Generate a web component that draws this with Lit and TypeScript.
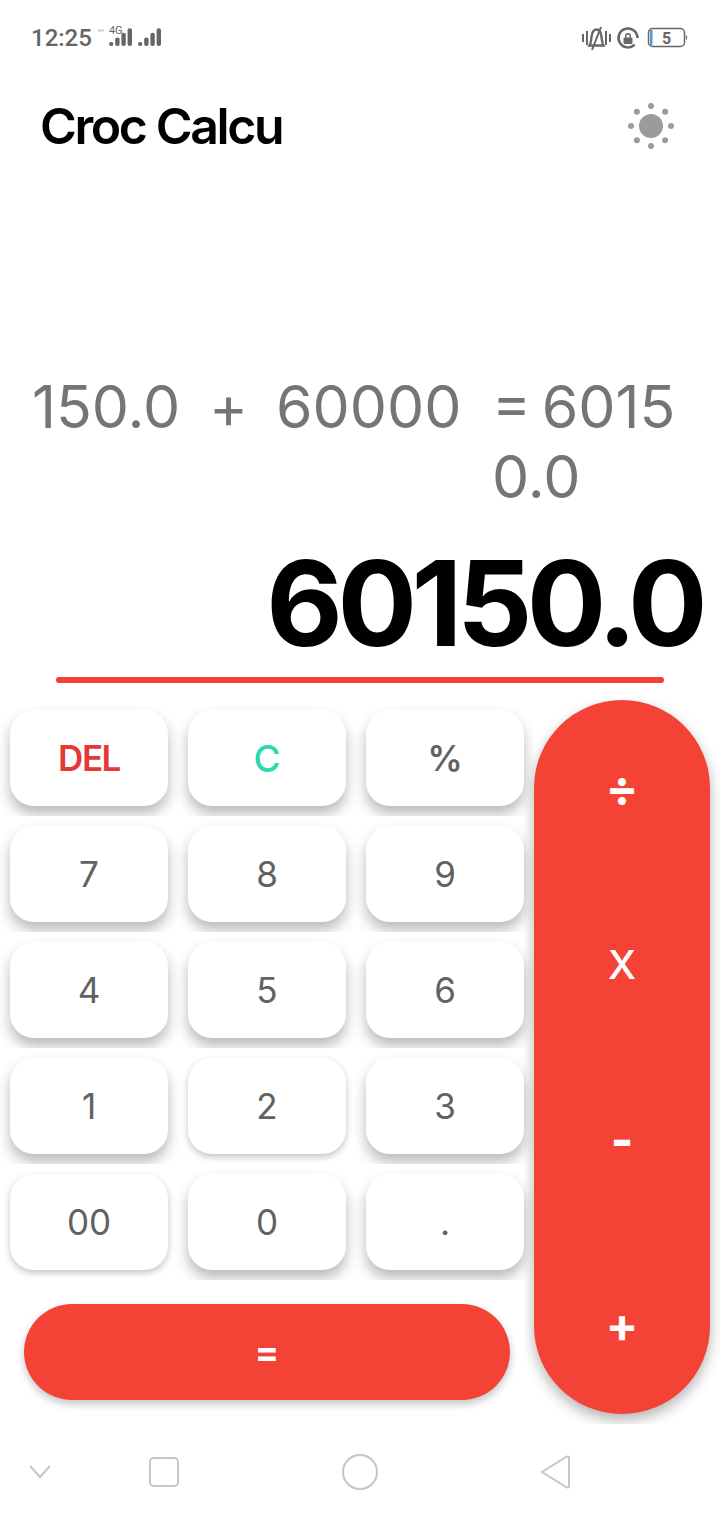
import { LitElement, css, html, svg } from "lit";
import { customElement } from "lit/decorators.js";

const ROWS = [
  [["DEL", "del"], ["C", "clear"], ["%", "pct"]],
  [["7", ""], ["8", ""], ["9", ""]],
  [["4", ""], ["5", ""], ["6", ""]],
  [["1", ""], ["2", "soft"], ["3", ""]],
  [["00", "soft"], ["0", ""], [".", ""]],
];

const OPS = [["÷", "sym"], ["X", "letter"], ["-", "minus"], ["+", "sym"]];

const SUN_DOTS = [0, 45, 90, 135, 180, 225, 270, 315];

@customElement("app-root")
export class AppRoot extends LitElement {
  static styles = css`
    :host {
      display: block;
      width: 720px;
      height: 1520px;
      background: #fff;
      font-family: Inter, Lato, sans-serif;
      overflow: hidden;
    }
    .status {
      height: 76px;
      display: flex;
      align-items: center;
      padding: 0 33px 0 31px;
      color: #666;
    }
    .clock {
      font-family: Roboto, sans-serif;
      font-size: 24px;
      font-weight: 500;
      color: #666;
    }
    .net {
      position: relative;
      display: flex;
      margin-left: 5px;
    }
    .net-label {
      position: absolute;
      left: 12px;
      top: -3px;
      font-family: Roboto, sans-serif;
      font-size: 11px;
      line-height: 11px;
      color: #666;
    }
    .spacer {
      flex: 1;
    }
    .status-right {
      display: flex;
      align-items: center;
    }
    .header {
      height: 100px;
      display: flex;
      align-items: center;
      justify-content: space-between;
      padding: 0 46px 0 40px;
    }
    .title {
      font-size: 50px;
      font-weight: 600;
      letter-spacing: -2.4px;
      color: #000;
    }
    .sun {
      display: block;
    }
    .history {
      display: flex;
      align-items: flex-start;
      padding: 196px 0 0 32px;
      font-size: 59px;
      line-height: 70px;
      color: #757575;
      height: 146px;
    }
    .h-a {
      width: 177px;
    }
    .h-op {
      width: 67px;
    }
    .h-b {
      width: 216px;
    }
    .h-res {
      width: 190px;
      word-break: break-all;
      word-spacing: -6px;
    }
    .result {
      padding: 20px 18px 0 0;
      text-align: right;
      font-size: 118px;
      line-height: 130px;
      font-weight: 700;
      color: #000;
      letter-spacing: -5.5px;
    }
    .rule {
      height: 6px;
      margin: 9px 56px 0;
      border-radius: 3px;
      background: #f44336;
    }
    .pad {
      display: flex;
      margin-top: 17px;
    }
    .keys {
      width: 534px;
    }
    .row {
      display: flex;
      height: 116px;
      overflow: hidden;
    }
    .cell {
      width: 178px;
      padding: 10px;
      box-sizing: border-box;
    }
    .key {
      height: 96px;
      border-radius: 24px;
      background: #fff;
      box-shadow: 0 8px 14px rgba(0, 0, 0, 0.28);
      display: flex;
      align-items: center;
      justify-content: center;
      font-size: 35px;
      color: #616161;
    }
    .soft {
      box-shadow: 0 3px 7px rgba(0, 0, 0, 0.24);
    }
    .del {
      color: #e53935;
      font-weight: 600;
      letter-spacing: -1.5px;
    }
    .clear {
      color: #2bd9b0;
      font-weight: 500;
      font-size: 37px;
    }
    .pct {
      font-weight: 600;
    }
    .equals-wrap {
      padding: 24px 24px 0;
    }
    .equals {
      height: 96px;
      border-radius: 48px;
      background: #f44336;
      box-shadow: 0 4px 8px rgba(0, 0, 0, 0.24);
      display: flex;
      align-items: center;
      justify-content: center;
      font-size: 36px;
      font-weight: 700;
      color: #fff;
    }
    .ops-clip {
      margin-left: -10px;
      padding-left: 10px;
      width: 186px;
      height: 724px;
      overflow: hidden;
    }
    .ops {
      width: 176px;
      height: 714px;
      border-radius: 88px;
      background: #f44336;
      box-shadow: 0 6px 14px rgba(0, 0, 0, 0.3);
      display: flex;
      flex-direction: column;
      align-items: center;
    }
    .op {
      height: 181px;
      display: flex;
      align-items: center;
      justify-content: center;
      font-size: 38px;
      font-weight: 600;
      line-height: 1;
      color: #fff;
    }
    .op:first-child {
      margin-top: -1px;
    }
    .sym {
      font-size: 48px;
      font-weight: 700;
    }
    .letter {
      font-size: 40px;
      font-weight: 500;
    }
    .minus {
      font-size: 48px;
      font-weight: 800;
      padding-bottom: 5px;
      height: 176px;
    }
    .minus + .op {
      margin-top: 5px;
    }
    .nav {
      height: 96px;
      display: flex;
      align-items: center;
    }
    .nav svg {
      fill: none;
      stroke: #c6c6c6;
      stroke-width: 2;
      display: block;
    }
    .nav-chevron {
      margin-left: 29px;
    }
    .nav-square {
      margin-left: 98px;
    }
    .nav-circle {
      margin-left: 163px;
    }
    .nav-back {
      margin-left: 162px;
    }
  `;

  private renderBars(x: number) {
    return [0, 1, 2, 3].map(
      (i) => svg`<rect x=${x + i * 6.2} y=${14 - i * 4.6} width="4.4" height=${4 + i * 4.6} rx="2" fill="#666" />`
    );
  }

  private renderStatus() {
    return html`
      <div class="status">
        <span class="clock">12:25</span>
        <div class="net">
          <span class="net-label">4G</span>
          <svg width="64" height="20" viewBox="0 0 64 20">
            <path d="M1 2.500h6" stroke="#ccc" stroke-width="2" />
            ${this.renderBars(12)}
            ${this.renderBars(41)}
          </svg>
        </div>
        <div class="spacer"></div>
        <div class="status-right">
          <svg width="106" height="26" viewBox="0 0 106 26" fill="none" stroke="#666">
            <path d="M2 9v8M6 6v14M25 6v14M29 9v8" stroke-width="2" />
            <path d="M8.500 20.500c2-3 1.500-7 2.200-10 .8-4 2.800-6 4.800-6s4 2 4.800 6c.7 3 .2 7 2.200 10z" stroke-width="2.400" />
            <path d="M20 2 11 25" stroke-width="2" />
            <path d="M53.700 19.700A9.500 9.500 0 1 1 56.500 13" stroke-width="2.500" />
            <path d="M44 12.500V11a3 3 0 0 1 6 0v1.500h-1.500V11a1.500 1.500 0 0 0-3 0v1.500z" fill="#666" stroke="none" />
            <rect x="42.500" y="12.500" width="9" height="6.500" rx="1" fill="#666" stroke="none" />
            <rect x="67.500" y="3.500" width="36" height="18" rx="4" stroke-width="1.500" />
            <rect x="69" y="5" width="2.500" height="15" fill="#4a9bd4" stroke="none" />
            <rect x="105" y="10.500" width="1" height="4" fill="#666" stroke="none" />
            <text x="85.500" y="18.500" text-anchor="middle" font-family="Roboto, sans-serif" font-size="16" font-weight="700" fill="#666" stroke="none">5</text>
          </svg>
        </div>
      </div>
    `;
  }

  private renderKey([label, kind]: string[]) {
    return html`<div class="cell"><div class="key ${kind}">${label}</div></div>`;
  }

  render() {
    return html`
      ${this.renderStatus()}
      <div class="header">
        <span class="title">Croc Calcu</span>
        <svg class="sun" width="46" height="46" viewBox="-23 -23 46 46" fill="#9b9b9b">
          <circle r="12" />
          ${SUN_DOTS.map((deg) => {
            const a = (deg * Math.PI) / 180;
            return svg`<circle cx=${20 * Math.cos(a)} cy=${20 * Math.sin(a)} r="3" />`;
          })}
        </svg>
      </div>
      <div class="history">
        <span class="h-a">150.0</span>
        <span class="h-op">+</span>
        <span class="h-b">60000</span>
        <span class="h-res">= 60150.0</span>
      </div>
      <div class="result">60150.0</div>
      <div class="rule"></div>
      <div class="pad">
        <div class="keys">
          ${ROWS.map((row) => html`<div class="row">${row.map((k) => this.renderKey(k))}</div>`)}
          <div class="equals-wrap"><div class="equals">=</div></div>
        </div>
        <div class="ops-clip">
          <div class="ops">${OPS.map(([op, kind]) => html`<div class="op ${kind}">${op}</div>`)}</div>
        </div>
      </div>
      <div class="nav">
        <svg class="nav-chevron" width="22" height="14" viewBox="0 0 22 14"><path d="M1 1l10 11L21 1" /></svg>
        <svg class="nav-square" width="30" height="30" viewBox="0 0 30 30"><rect x="1" y="1" width="28" height="28" rx="4" /></svg>
        <svg class="nav-circle" width="36" height="36" viewBox="0 0 36 36"><circle cx="18" cy="18" r="17" /></svg>
        <svg class="nav-back" width="30" height="34" viewBox="0 0 30 34"><path d="M2 17 26 2c1.500-1 3-.5 3 1v28c0 1.500-1.500 2-3 1z" /></svg>
      </div>
    `;
  }
}
